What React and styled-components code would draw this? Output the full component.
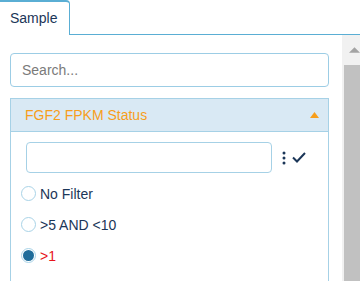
import React from 'react';
import styled, { createGlobalStyle } from 'styled-components';

const GlobalStyle = createGlobalStyle`
    html, body {
        margin: 0;
        padding: 0;
        background: #fff;
        font-family: "Liberation Sans", Arial, sans-serif;
        overflow: hidden;
    }
`;

const Page = styled.div`
    width: 360px;
    height: 281px;
    display: flex;
    flex-direction: column;
    overflow: hidden;
`;

const TabBar = styled.div`
    display: flex;
    height: 35px;
    flex-shrink: 0;
`;

const Tab = styled.div`
    width: 70px;
    box-sizing: border-box;
    border-top: 2px solid #5aaed4;
    border-right: 1px solid #5aaed4;
    border-top-right-radius: 4px;
    padding: 8px 0 0 10px;
    font-size: 14px;
    color: #1b3658;
`;

const TabFiller = styled.div`
    flex: 1;
    border-bottom: 1px solid #5aaed4;
`;

const Body = styled.div`
    flex: 1;
    display: flex;
    min-height: 0;
`;

const Content = styled.div`
    flex: 1;
    padding: 18px 13px 0 10px;
    display: flex;
    flex-direction: column;
    gap: 11px;
`;

const SearchInput = styled.input`
    box-sizing: border-box;
    width: 319px;
    height: 34px;
    border: 1px solid #9ccde5;
    border-radius: 4px;
    padding: 0 11px;
    font-family: inherit;
    font-size: 14px;
    color: #333;
    outline: none;
    &::placeholder {
        color: #7a7a7a;
    }
`;

const Panel = styled.div`
    width: 319px;
    box-sizing: border-box;
    border: 1px solid #a6d1e6;
    border-bottom: none;
    flex: 1;
`;

const PanelHeader = styled.div`
    height: 32px;
    background: #d9e9f4;
    border-bottom: 1px solid #a6d1e6;
    display: flex;
    align-items: center;
    justify-content: space-between;
    padding: 0 9px 0 14px;
    font-size: 14px;
    color: #f79e1b;
`;

const PanelBody = styled.div`
    padding: 10px 0 0 15px;
`;

const FilterRow = styled.div`
    display: flex;
    align-items: center;
`;

const FilterInput = styled.input`
    box-sizing: border-box;
    width: 246px;
    height: 31px;
    border: 1px solid #a6d1e6;
    border-radius: 4px;
    outline: none;
`;

const IconButton = styled.span`
    display: inline-flex;
    align-items: center;
    margin-left: ${p => p.$gap}px;
`;

const RadioList = styled.div`
    display: flex;
    flex-direction: column;
    padding: 12px 0 0 0;
    margin-left: -5px;
    gap: 14px;
`;

const RadioLabel = styled.label`
    display: flex;
    align-items: center;
    height: 17px;
    font-size: 14px;
    color: ${p => (p.$active ? '#e8141b' : '#1b3658')};
`;

const RadioCircle = styled.span`
    box-sizing: border-box;
    width: 15px;
    height: 15px;
    border-radius: 50%;
    border: 1px solid #a9d3e7;
    margin-right: 4px;
    display: inline-flex;
    align-items: center;
    justify-content: center;
    &::after {
        content: '';
        display: ${p => (p.$checked ? 'block' : 'none')};
        width: 11px;
        height: 11px;
        border-radius: 50%;
        background: #1f6c9a;
    }
`;

const Scrollbar = styled.div`
    width: 18px;
    background: #f1f1f1;
    display: flex;
    flex-direction: column;
    overflow: hidden;
`;

const ScrollArrow = styled.div`
    height: 30px;
    display: flex;
    align-items: center;
    padding-left: 7px;
`;

const ScrollThumb = styled.div`
    flex: 1;
    margin-left: 2px;
    background: #c1c1c1;
`;

const options = ['No Filter', '>5 AND <10', '>1'];

function App() {
    const selected = '>1';
    return (
        <Page>
            <GlobalStyle />
            <TabBar>
                <Tab>Sample</Tab>
                <TabFiller />
            </TabBar>
            <Body>
                <Content>
                    <SearchInput placeholder="Search..." />
                    <Panel>
                        <PanelHeader>
                            <span>FGF2 FPKM Status</span>
                            <svg width="9" height="6" viewBox="0 0 9 6">
                                <polygon points="4.5,0 9,6 0,6" fill="#f79e1b" />
                            </svg>
                        </PanelHeader>
                        <PanelBody>
                            <FilterRow>
                                <FilterInput />
                                <IconButton $gap={10}>
                                    <svg width="4" height="14" viewBox="0 0 4 14">
                                        <circle cx="2" cy="2" r="1.5" fill="#1b3658" />
                                        <circle cx="2" cy="7" r="1.5" fill="#1b3658" />
                                        <circle cx="2" cy="12" r="1.5" fill="#1b3658" />
                                    </svg>
                                </IconButton>
                                <IconButton $gap={6}>
                                    <svg width="14" height="11" viewBox="0 0 14 11">
                                        <path d="M1 5.5 L5 9.5 L13 1" stroke="#1b3658" strokeWidth="2" fill="none" />
                                    </svg>
                                </IconButton>
                            </FilterRow>
                            <RadioList>
                                {options.map(o => (
                                    <RadioLabel key={o} $active={o === selected}>
                                        <RadioCircle $checked={o === selected} />
                                        {o}
                                    </RadioLabel>
                                ))}
                            </RadioList>
                        </PanelBody>
                    </Panel>
                </Content>
                <Scrollbar>
                    <ScrollArrow>
                        <svg width="12" height="6" viewBox="0 0 12 6">
                            <polygon points="6,0 12,6 0,6" fill="#a3a3a3" />
                        </svg>
                    </ScrollArrow>
                    <ScrollThumb />
                </Scrollbar>
            </Body>
        </Page>
    );
}

export default App;
